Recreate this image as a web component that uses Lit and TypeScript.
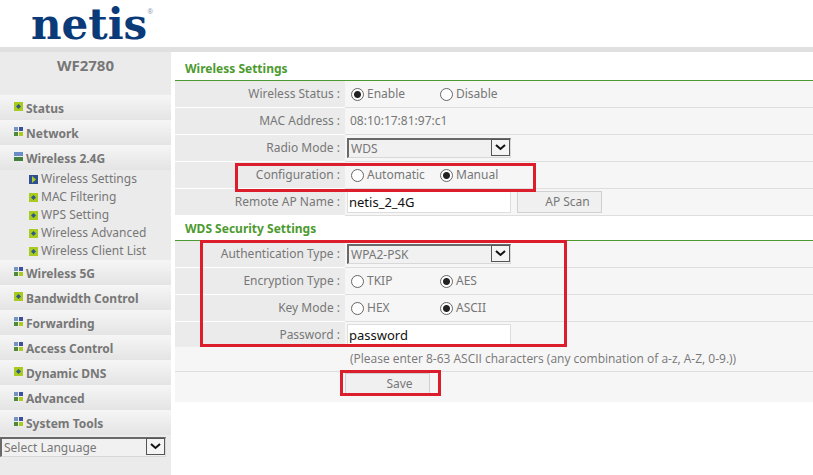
import { LitElement, html, css, svg, nothing } from "lit";
import { customElement, property } from "lit/decorators.js";

type IconKind = "plus" | "grid" | "open" | "play";

interface MenuItem {
  label: string;
  icon: IconKind;
  children?: { label: string; icon: IconKind }[];
}

const MENU: MenuItem[] = [
  { label: "Status", icon: "plus" },
  { label: "Network", icon: "grid" },
  {
    label: "Wireless 2.4G",
    icon: "open",
    children: [
      { label: "Wireless Settings", icon: "play" },
      { label: "MAC Filtering", icon: "plus" },
      { label: "WPS Setting", icon: "plus" },
      { label: "Wireless Advanced", icon: "plus" },
      { label: "Wireless Client List", icon: "plus" },
    ],
  },
  { label: "Wireless 5G", icon: "grid" },
  { label: "Bandwidth Control", icon: "plus" },
  { label: "Forwarding", icon: "grid" },
  { label: "Access Control", icon: "grid" },
  { label: "Dynamic DNS", icon: "plus" },
  { label: "Advanced", icon: "grid" },
  { label: "System Tools", icon: "grid" },
];

const GLYPHS = {
  plus: svg`<rect width="9" height="9" fill="#a9cb20"/><path d="M4.500 2L7 4.500 4.500 7 2 4.500z" fill="#2f5a85"/>`,
  grid: svg`<rect width="4" height="4" fill="#7593bd"/><rect x="5" width="4" height="4" fill="#3c4f9c"/><rect y="5" width="4" height="4" fill="#4f8a3c"/><rect x="5" y="5" width="4" height="4" fill="#a9cb20"/>`,
  open: svg`<rect width="9" height="4" fill="#6a8cc4"/><rect y="5" width="9" height="4" fill="#45803f"/>`,
  play: svg`<rect width="9" height="9" fill="#2f4f92"/><path d="M3 1L7 4.500 3 8z" fill="#a9d020"/>`,
};

@customElement("menu-icon")
class MenuIcon extends LitElement {
  @property() kind: IconKind = "plus";
  static styles = css`
    :host { display: block; flex: none; width: 9px; height: 9px; }
    svg { display: block; }
  `;
  render() {
    return html`<svg width="9" height="9" viewBox="0 0 9 9" aria-hidden="true">${GLYPHS[this.kind]}</svg>`;
  }
}

@customElement("drop-down")
class DropDown extends LitElement {
  @property() value = "";
  @property() label = "";
  static styles = css`
    :host { display: block; position: relative; height: 20px; }
    select {
      appearance: none;
      display: block;
      box-sizing: border-box;
      width: 100%;
      height: 20px;
      margin: 0;
      padding: 0 20px 0 2px;
      border: 1px solid #d8d8d8;
      border-top: 2px solid #696969;
      border-left: 2px solid #696969;
      border-radius: 0;
      background: #f1f1f1;
      color: #777;
      font: 12px/18px "Noto Sans", "Open Sans", sans-serif;
    }
    svg { position: absolute; top: 1px; right: 1px; pointer-events: none; }
  `;
  render() {
    return html`<select aria-label=${this.label}><option>${this.value}</option></select>
      <svg width="19" height="17" viewBox="0 0 19 17" aria-hidden="true">
        <rect x="0.500" y="0.500" width="18" height="16" fill="#f4f4f4" stroke="#555"/>
        <path d="M5 6l4.500 4L14 6" fill="none" stroke="#111" stroke-width="2"/>
      </svg>`;
  }
}

@customElement("app-root")
class AppRoot extends LitElement {
  static styles = css`
    :host {
      display: block;
      min-height: 100vh;
      background: #fff;
      color: #777;
      font: 12px/18px "Noto Sans", "Open Sans", sans-serif;
    }
    * { box-sizing: border-box; }
    .page { display: flex; flex-direction: column; min-height: 100vh; }
    header {
      height: 52px;
      padding-left: 31px;
      border-bottom: 5px solid #e0e0e0;
      display: flex;
      align-items: flex-start;
    }
    .logo {
      margin: 0;
      color: #0a3a78;
      font: bold 42px/49px "DejaVu Serif", serif;
    }
    .mark { color: #8a9ab0; font: 7px/24px "Open Sans", sans-serif; }
    .body { flex: 1; display: flex; gap: 4px; }
    .side { flex: none; width: 171px; background: #ebebeb; }
    .model { margin: 0; height: 43px; text-align: center; font: 700 15px/26px "Open Sans", sans-serif; }
    ul { list-style: none; margin: 0; padding: 0; }
    a { display: flex; color: inherit; text-decoration: none; white-space: nowrap; }
    .top {
      height: 25px;
      padding: 7px 0 0 14px;
      gap: 3px;
      font-weight: 700;
      line-height: 13px;
      background: linear-gradient(#f6f6f6, #e4e4e4);
    }
    .sub { padding-left: 29px; }
    .sub a { height: 18px; gap: 3px; align-items: center; }
    .lang { width: 166px; margin-top: 2px; }
    main { flex: 1; min-width: 0; }
    h2 {
      margin: 0;
      height: 29px;
      padding: 7px 0 0 10px;
      border-bottom: 1px solid #4c9a2f;
      color: #4c9a2f;
      font-size: 12px;
      line-height: 20px;
    }
    .next { height: 25px; padding-top: 3px; }
    .group { position: relative; }
    .row { display: grid; grid-template-columns: 170px 1fr; height: 27px; }
    .last { height: 25px; }
    .name {
      padding: 4px 5px 0 0;
      border-bottom: 1px solid #fff;
      background: #ebebeb;
      text-align: right;
      line-height: 18px;
    }
    .field {
      display: flex;
      align-items: center;
      padding-left: 2px;
      border-bottom: 1px solid #dedede;
      background: #f6f6f6;
    }
    .last .name, .last .field { border: 0; }
    .radio { display: flex; align-items: center; gap: 3px; width: 89px; padding-left: 4px; white-space: nowrap; line-height: 18px; }
    .mac { padding-left: 3px; }
    input[type="radio"] {
      appearance: none;
      flex: none;
      width: 13px;
      height: 13px;
      margin: 0;
      border: 1px solid #666;
      border-radius: 50%;
      background: #fff;
    }
    input[type="radio"]:checked { background: radial-gradient(circle, #222 3px, #fff 4px); }
    .text {
      width: 164px;
      height: 22px;
      padding: 0 1px;
      border: 1px solid #ddd;
      background: #fff;
      color: #111;
      font: 13px/20px "Noto Sans", "Open Sans", sans-serif;
    }
    .pick { width: 164px; }
    button {
      height: 22px;
      border: 1px solid #d0d0d0;
      background: #f0f0f0;
      color: #777;
      font: 12px/18px "Noto Sans", "Open Sans", sans-serif;
    }
    .scan { width: 85px; margin-left: 6px; padding: 0 0 0 16px; }
    .save { width: 85px; padding: 0 0 0 24px; }
    .note { height: 25px; padding-left: 175px; font-family: "Open Sans", sans-serif; }
    .foot { height: 30px; padding: 0 0 6px 170px; border: 0; }
    .mark-box { position: absolute; border: 3px solid #dc1e2c; pointer-events: none; }
    .m1 { top: 1px; left: 60px; width: 301px; height: 29px; }
    .m2 { top: -1px; left: 25px; width: 367px; height: 107px; }
    .m3 { top: -2px; left: 165px; width: 101px; height: 26px; }
  `;

  private radios(name: string, options: string[], chosen: string) {
    return options.map(
      (o) => html`<label class="radio"><input type="radio" name=${name} ?checked=${o === chosen} />${o}</label>`
    );
  }

  private row(name: string, field: unknown, forId?: string, last = false) {
    return html`<div class=${last ? "row last" : "row"}>
      ${forId ? html`<label class="name" for=${forId}>${name} :</label>` : html`<div class="name">${name} :</div>`}
      <div class="field">${field}</div>
    </div>`;
  }

  render() {
    return html`<div class="page">
      <header><h1 class="logo">netis</h1><span class="mark">®</span></header>
      <div class="body">
        <nav class="side">
          <p class="model">WF2780</p>
          <ul>
            ${MENU.map(
              (m) => html`<li>
                <a class="top" href="#"><menu-icon kind=${m.icon}></menu-icon><span>${m.label}</span></a>
                ${m.children
                  ? html`<ul class="sub">
                      ${m.children.map((c) => html`<li><a href="#"><menu-icon kind=${c.icon}></menu-icon>${c.label}</a></li>`)}
                    </ul>`
                  : nothing}
              </li>`
            )}
          </ul>
          <drop-down class="lang" label="Language" value="Select Language"></drop-down>
        </nav>
        <main>
          <h2>Wireless Settings</h2>
          ${this.row("Wireless Status", this.radios("status", ["Enable", "Disable"], "Enable"))}
          ${this.row("MAC Address", html`<span class="mac">08:10:17:81:97:c1</span>`)}
          ${this.row("Radio Mode", html`<drop-down class="pick" label="Radio Mode" value="WDS"></drop-down>`)}
          <div class="group">
            ${this.row("Configuration", this.radios("config", ["Automatic", "Manual"], "Manual"))}
            <div class="mark-box m1"></div>
          </div>
          ${this.row(
            "Remote AP Name",
            html`<input class="text" id="ap" value="netis_2_4G" /><button class="scan">AP Scan</button>`,
            "ap"
          )}
          <h2 class="next">WDS Security Settings</h2>
          <div class="group">
            ${this.row("Authentication Type", html`<drop-down class="pick" label="Authentication Type" value="WPA2-PSK"></drop-down>`)}
            ${this.row("Encryption Type", this.radios("enc", ["TKIP", "AES"], "AES"))}
            ${this.row("Key Mode", this.radios("key", ["HEX", "ASCII"], "ASCII"))}
            ${this.row("Password", html`<input class="text" id="pw" value="password" />`, "pw", true)}
            <div class="mark-box m2"></div>
          </div>
          <div class="field note">(Please enter 8-63 ASCII characters (any combination of a-z, A-Z, 0-9.))</div>
          <div class="group">
            <div class="field foot"><button class="save">Save</button></div>
            <div class="mark-box m3"></div>
          </div>
        </main>
      </div>
    </div>`;
  }
}
